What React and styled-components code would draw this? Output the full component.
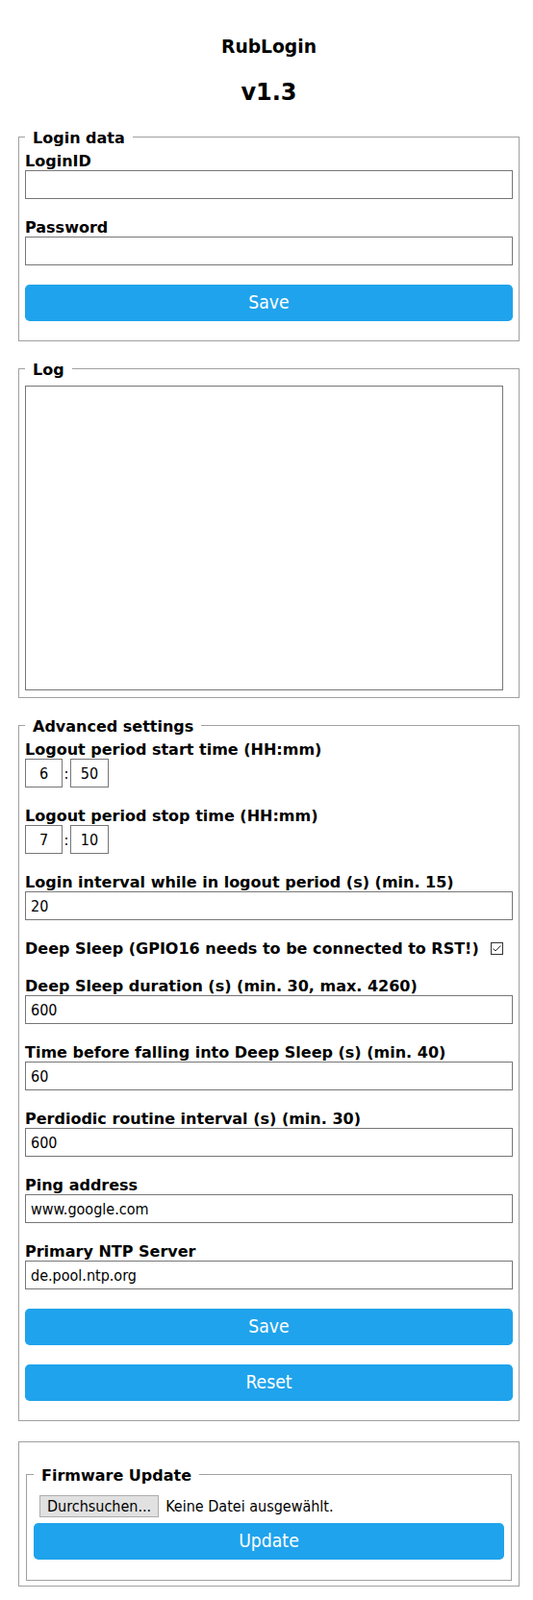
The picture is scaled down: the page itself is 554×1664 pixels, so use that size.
import React from 'react';
import styled, { createGlobalStyle } from 'styled-components';

const condensed = `"DejaVu Sans Condensed", "DejaVu Sans", sans-serif`;

const GlobalStyle = createGlobalStyle`
  html, body {
    margin: 0;
    padding: 0;
    background: #fff;
  }
  body {
    font-family: "DejaVu Sans", Verdana, sans-serif;
    color: #000;
  }
  *, *::before, *::after {
    box-sizing: border-box;
  }
`;

const Page = styled.main`
  padding: 38px 14px 14px 19px;
`;

const Title = styled.h1`
  margin: 0;
  text-align: center;
  font-size: 18.72px;
  line-height: 22px;
  font-weight: bold;
`;

const Version = styled.h2`
  margin: 22px 0 0;
  text-align: center;
  font-size: 24px;
  line-height: 28px;
  font-weight: bold;
`;

const Panel = styled.fieldset`
  margin: ${(p) => p.$mt || 0}px 0 0;
  min-width: 0;
  border: 1px solid #a0a0a0;
  padding: ${(p) => p.$pad || '6px 6px 20px'};
`;

const Legend = styled.legend`
  padding: 2px 8px 0;
  font-size: 16px;
  line-height: 17px;
  font-weight: bold;
`;

const Field = styled.div`
  & + & {
    margin-top: 20px;
  }
`;

const Label = styled.label`
  display: block;
  font-size: 16px;
  line-height: 19px;
  font-weight: bold;
`;

const TextInput = styled.input`
  display: block;
  width: 100%;
  height: 30px;
  margin: 0;
  padding: 0 5px;
  border: 1px solid #767676;
  border-radius: 0;
  background: #fff;
  color: #000;
  font-family: ${condensed};
  font-size: 16px;
  outline: none;
`;

const TimeRow = styled.div`
  display: flex;
  align-items: center;
`;

const TimeInput = styled(TextInput)`
  width: ${(p) => p.$w || 39}px;
  padding: 0;
  text-align: center;
`;

const Colon = styled.span`
  width: 8px;
  text-align: center;
  font-family: ${condensed};
  font-size: 16px;
`;

const CheckRow = styled.div`
  display: flex;
  align-items: center;
`;

const CheckBox = styled.span`
  display: inline-flex;
  align-items: center;
  justify-content: center;
  width: 13px;
  height: 13px;
  margin-left: 12px;
  border: 1px solid #333;
  background: #fff;
`;

const LogBox = styled.textarea`
  display: block;
  width: 497px;
  height: 317px;
  margin: 2px 0 0;
  padding: 2px;
  border: 1px solid #767676;
  resize: none;
  outline: none;
`;

const BlueButton = styled.button`
  display: block;
  width: 100%;
  height: 38px;
  margin-top: ${(p) => p.$mt ?? 20}px;
  padding: 0;
  border: 0;
  border-radius: 4.8px;
  background: #1fa3ec;
  color: #fff;
  font-family: ${condensed};
  font-size: 19.2px;
  line-height: 38px;
`;

const FileRow = styled.div`
  display: flex;
  align-items: center;
  gap: 7px;
  height: 23px;
  margin-top: 6px;
  padding-left: 6px;
  font-family: ${condensed};
  font-size: 16px;
`;

const BrowseButton = styled.button`
  height: 23px;
  padding: 0 7px;
  border: 1px solid #adadad;
  background: #e1e1e1;
  color: #000;
  font-family: ${condensed};
  font-size: 16px;
`;

const fields = [
  { label: 'Login interval while in logout period (s) (min. 15)', value: '20' },
  { check: 'Deep Sleep (GPIO16 needs to be connected to RST!)' },
  { label: 'Deep Sleep duration (s) (min. 30, max. 4260)', value: '600' },
  { label: 'Time before falling into Deep Sleep (s) (min. 40)', value: '60' },
  { label: 'Perdiodic routine interval (s) (min. 30)', value: '600' },
  { label: 'Ping address', value: 'www.google.com' },
  { label: 'Primary NTP Server', value: 'de.pool.ntp.org' },
];

function TimeField({ label, hour, minute }) {
  return (
    <Field>
      <Label>{label}</Label>
      <TimeRow>
        <TimeInput defaultValue={hour} />
        <Colon>:</Colon>
        <TimeInput $w={40} defaultValue={minute} />
      </TimeRow>
    </Field>
  );
}

export default function App() {
  return (
    <>
      <GlobalStyle />
      <Page>
        <Title>RubLogin</Title>
        <Version>v1.3</Version>

        <Panel $mt={23}>
          <Legend>Login data</Legend>
          <Field>
            <Label>LoginID</Label>
            <TextInput />
          </Field>
          <Field>
            <Label>Password</Label>
            <TextInput type="password" />
          </Field>
          <BlueButton>Save</BlueButton>
        </Panel>

        <Panel $mt={19} $pad="6px 6px 7px">
          <Legend>Log</Legend>
          <LogBox readOnly />
        </Panel>

        <Panel $mt={19}>
          <Legend>Advanced settings</Legend>
          <TimeField label="Logout period start time (HH:mm)" hour="6" minute="50" />
          <TimeField label="Logout period stop time (HH:mm)" hour="7" minute="10" />
          {fields.map((f) =>
            f.check ? (
              <Field key={f.check}>
                <CheckRow>
                  <Label>{f.check}</Label>
                  <CheckBox>
                    <svg width="11" height="11" viewBox="0 0 11 11">
                      <polyline points="1.5,5.5 4,8 9.5,2.5" fill="none" stroke="#333" strokeWidth="1" />
                    </svg>
                  </CheckBox>
                </CheckRow>
              </Field>
            ) : (
              <Field key={f.label}>
                <Label>{f.label}</Label>
                <TextInput defaultValue={f.value} />
              </Field>
            )
          )}
          <BlueButton>Save</BlueButton>
          <BlueButton>Reset</BlueButton>
        </Panel>

        <Panel $mt={21} $pad="24px 7px 5px">
          <Panel $pad="6px 7px 21px">
            <Legend>Firmware Update</Legend>
            <FileRow>
              <BrowseButton>Durchsuchen...</BrowseButton>
              <span>Keine Datei ausgewählt.</span>
            </FileRow>
            <BlueButton $mt={6}>Update</BlueButton>
          </Panel>
        </Panel>
      </Page>
    </>
  );
}
